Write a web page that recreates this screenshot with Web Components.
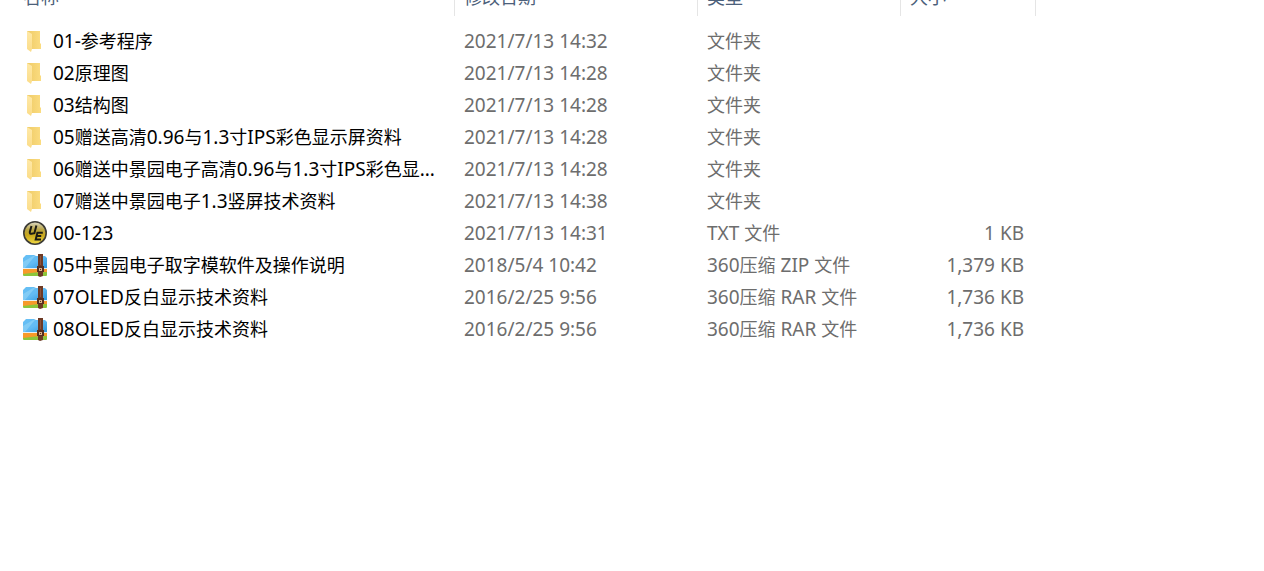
<!DOCTYPE html>
<html lang="zh-CN">
<head>
<meta charset="utf-8">
<title>文件列表</title>
<style>
body{margin:0;background:#fff;font:18px/32px "Noto Sans","Noto Sans CJK SC",sans-serif;color:#000}
</style>
</head>
<body>
<file-list></file-list>
<script>
// Text in which Latin runs are set one step larger than the Chinese characters.
class MixedText extends HTMLElement{
  connectedCallback(){
    const root=this.attachShadow({mode:'open'});
    root.innerHTML='<style>:host{display:inline;white-space:pre}.latin{font-size:19px}</style>';
    for(const run of this.getAttribute('text').match(/[\x00-\x7f]+|[^\x00-\x7f]+/g)||[]){
      const span=document.createElement('span');
      if(run.charCodeAt(0)<128) span.className='latin';
      span.textContent=run;
      root.append(span);
    }
  }
}
customElements.define('mixed-text',MixedText);

const ICONS={
folder:`<defs><linearGradient id="b" x2="1"><stop stop-color="#efcb67"/><stop offset="1" stop-color="#fbdc80"/></linearGradient><linearGradient id="f" x2="0" y2="1"><stop stop-color="#ffe9a8"/><stop offset="1" stop-color="#fbdc88"/></linearGradient></defs>
<path d="M4 2H17V14L18 15V20H8L4 17Z" fill="url(#b)"/><path d="M4 2L9 5V20L8 23L4 20Z" fill="url(#f)"/>`,
text:`<defs><linearGradient id="g" x2="0" y2="1"><stop stop-color="#dcd9c8"/><stop offset=".35" stop-color="#b9a545"/><stop offset=".6" stop-color="#c9a81c"/><stop offset="1" stop-color="#f0d944"/></linearGradient></defs>
<circle cx="12" cy="12" r="11.2" fill="url(#g)" stroke="#3c3b36" stroke-width="1.6"/>
<path d="M8.5 5L6.8 11Q6.6 13 8.5 12.7L11.4 12.2L13.4 4.6" fill="none" stroke="#1b1a14" stroke-width="2"/>
<path d="M19.8 11.8H14.4L12.7 18.6H18M13.6 15.1H18.2" fill="none" stroke="#1b1a14" stroke-width="2"/>`,
archive:`<defs><linearGradient id="s" x2="1" y2="1"><stop stop-color="#67c0f5"/><stop offset=".5" stop-color="#62bbf3"/><stop offset="1" stop-color="#2e97dd"/></linearGradient></defs>
<path d="M0 18H24V22Q24 23 23 23H1Q0 23 0 22Z" fill="#8cc63c"/><path d="M0 16H24V19Q12 19 0 21Z" fill="#f79a2a"/><path d="M0 15H24V16H0Z" fill="#e8eef0"/>
<path d="M0 5L3 2H11L13 3H22L24 5V15H0Z" fill="url(#s)"/><path d="M0 9L10 3H12L2 15H0Z" fill="#a7def8" opacity=".45"/>
<path d="M15 1H20V23L17 24L15 23Z" fill="#6d3a25"/><path d="M14 13H21V19H14Z" fill="#57301f"/><path d="M16 15H19V18H16Z" fill="#d9b08a"/><path d="M17 16H18V17H17Z" fill="#57301f"/><path d="M17.5 3V12" stroke="#8c533b"/>`
};
class FileIcon extends HTMLElement{
  connectedCallback(){
    this.attachShadow({mode:'open'}).innerHTML=`<style>:host{display:block;flex:none;width:24px;height:24px}svg{display:block}</style>
    <svg width="24" height="24" viewBox="0 0 24 24" aria-hidden="true">${ICONS[this.getAttribute('kind')]}</svg>`;
  }
}
customElements.define('file-icon',FileIcon);

const FILES=[
['folder','01-参考程序','2021/7/13 14:32','文件夹',''],
['folder','02原理图','2021/7/13 14:28','文件夹',''],
['folder','03结构图','2021/7/13 14:28','文件夹',''],
['folder','05赠送高清0.96与1.3寸IPS彩色显示屏资料','2021/7/13 14:28','文件夹',''],
['folder','06赠送中景园电子高清0.96与1.3寸IPS彩色显...','2021/7/13 14:28','文件夹',''],
['folder','07赠送中景园电子1.3竖屏技术资料','2021/7/13 14:38','文件夹',''],
['text','00-123','2021/7/13 14:31','TXT 文件','1 KB'],
['archive','05中景园电子取字模软件及操作说明','2018/5/4 10:42','360压缩 ZIP 文件','1,379 KB'],
['archive','07OLED反白显示技术资料','2016/2/25 9:56','360压缩 RAR 文件','1,736 KB'],
['archive','08OLED反白显示技术资料','2016/2/25 9:56','360压缩 RAR 文件','1,736 KB']
];
class FileList extends HTMLElement{
  connectedCallback(){
    const t=s=>s?`<mixed-text text="${s}"></mixed-text>`:'';
    this.attachShadow({mode:'open'}).innerHTML=`<style>
:host{display:block}
table{width:100%;border-collapse:separate;border-spacing:0;table-layout:fixed}
.name{width:455px}.date{width:243px}.type{width:203px}.size{width:135px}
th{padding:0;font-weight:400;text-align:left;color:#4c607a}
th>div{box-sizing:border-box;height:16px;padding:0 0 7px 9px;border-right:1px solid #e5e5e5;overflow:hidden;display:flex;align-items:flex-end;line-height:24px}
th:first-child>div{padding-left:23px}
tbody::before{content:"";display:block;height:9px}
tbody td{height:32px;padding:0 0 0 9px;color:#6d6d6d;white-space:nowrap;line-height:32px}
tbody td:first-child{padding-left:23px;color:#000}
tbody td:nth-child(4){padding-right:12px;text-align:right}
thead td{padding:0}
.file{display:flex;align-items:center;gap:6px;height:32px}
</style>
<table><colgroup><col class="name"><col class="date"><col class="type"><col class="size"><col></colgroup>
<thead><tr>${['名称','修改日期','类型','大小'].map(h=>`<th scope="col"><div>${h}</div></th>`).join('')}<td></td></tr></thead>
<tbody>${FILES.map(([k,n,d,ty,s])=>`<tr><td><div class="file"><file-icon kind="${k}"></file-icon><span>${t(n)}</span></div></td><td>${t(d)}</td><td>${t(ty)}</td><td>${t(s)}</td></tr>`).join('')}</tbody></table>`;
  }
}
customElements.define('file-list',FileList);
</script>
</body>
</html>
